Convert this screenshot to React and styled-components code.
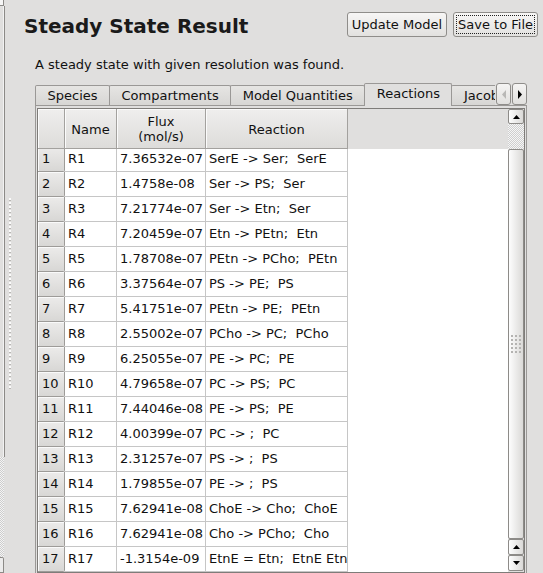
import React from "react";
import styled, { createGlobalStyle, css } from "styled-components";

const GlobalStyle = createGlobalStyle`
  html, body {
    margin: 0;
    padding: 0;
  }
  body {
    background: #e0dfde;
    font-family: "DejaVu Sans", "Liberation Sans", sans-serif;
    font-size: 13px;
    color: #000;
    overflow: hidden;
  }
  * {
    box-sizing: border-box;
  }
`;

const reactions = [
  ["R1", "7.36532e-07", "SerE -> Ser;  SerE"],
  ["R2", "1.4758e-08", "Ser -> PS;  Ser"],
  ["R3", "7.21774e-07", "Ser -> Etn;  Ser"],
  ["R4", "7.20459e-07", "Etn -> PEtn;  Etn"],
  ["R5", "1.78708e-07", "PEtn -> PCho;  PEtn"],
  ["R6", "3.37564e-07", "PS -> PE;  PS"],
  ["R7", "5.41751e-07", "PEtn -> PE;  PEtn"],
  ["R8", "2.55002e-07", "PCho -> PC;  PCho"],
  ["R9", "6.25055e-07", "PE -> PC;  PE"],
  ["R10", "4.79658e-07", "PC -> PS;  PC"],
  ["R11", "7.44046e-08", "PE -> PS;  PE"],
  ["R12", "4.00399e-07", "PC -> ;  PC"],
  ["R13", "2.31257e-07", "PS -> ;  PS"],
  ["R14", "1.79855e-07", "PE -> ;  PS"],
  ["R15", "7.62941e-08", "ChoE -> Cho;  ChoE"],
  ["R16", "7.62941e-08", "Cho -> PCho;  Cho"],
  ["R17", "-1.3154e-09", "EtnE = Etn;  EtnE Etn"],
];

const tabs = ["Species", "Compartments", "Model Quantities", "Reactions", "Jacobian"];

const Triangle = ({ dir = "up", color = "#000" }) => {
  const pts = {
    up: "0,4 3.5,0 7,4",
    down: "0,0 3.5,4 7,0",
    left: "4,0 0,4.5 4,9",
    right: "0,0 4,4.5 0,9",
  }[dir];
  const horizontal = dir === "left" || dir === "right";
  return (
    <svg width={horizontal ? 4 : 7} height={horizontal ? 9 : 4} viewBox={horizontal ? "0 0 4 9" : "0 0 7 4"}>
      <polygon points={pts} fill={color} />
    </svg>
  );
};

export default function App() {
  return (
    <>
      <GlobalStyle />
      <Window>
        <LeftPane>
          <LeftCap />
          <LeftBody />
          <LeftDither />
          <LeftFoot />
        </LeftPane>
        <Splitter>
          <SplitterGrip />
        </Splitter>

        <Main>
          <Header>
            <Title>Steady State Result</Title>
            <ButtonGroup>
              <Button>Update Model</Button>
              <Button $focused>Save to File</Button>
            </ButtonGroup>
          </Header>

          <Body>
            <Subtitle>A steady state with given resolution was found.</Subtitle>

            <TabBar>
              <TabList>
                {tabs.map((t) => (
                  <Tab key={t} $active={t === "Reactions"}>
                    {t}
                  </Tab>
                ))}
              </TabList>
              <TabArrows>
                <ArrowBtn>
                  <Triangle dir="left" color="#b9b8b6" />
                </ArrowBtn>
                <ArrowBtn>
                  <Triangle dir="right" />
                </ArrowBtn>
              </TabArrows>
            </TabBar>

            <Panel>
              <ScrollArea>
                <TableView>
                  <HeaderRow>
                    <HeadCell />
                    <HeadCell>Name</HeadCell>
                    <HeadCell>
                      Flux
                      <br />
                      (mol/s)
                    </HeadCell>
                    <HeadCell>Reaction</HeadCell>
                    <HeadFiller />
                  </HeaderRow>
                  <Viewport>
                    <Rows>
                      {reactions.map(([name, flux, eq], i) => (
                        <Row key={name}>
                          <RowHead>{i + 1}</RowHead>
                          <Cell>{name}</Cell>
                          <Cell>{flux}</Cell>
                          <Cell>{eq}</Cell>
                          <FillerCell />
                        </Row>
                      ))}
                    </Rows>
                  </Viewport>
                </TableView>

                <ScrollBar>
                  <ScrollBtn $h={15}>
                    <Triangle dir="up" />
                  </ScrollBtn>
                  <Trough />
                  <Thumb>
                    <svg width="11" height="19" viewBox="0 0 11 19">
                      {[0, 1, 2].map((c) =>
                        [0, 1, 2, 3, 4].map((r) => (
                          <rect key={`${c}-${r}`} x={c * 4} y={r * 4} width="2" height="2" fill="#b4b3b1" />
                        ))
                      )}
                    </svg>
                  </Thumb>
                  <ScrollBtn $h={16}>
                    <Triangle dir="up" />
                  </ScrollBtn>
                  <ScrollBtn $h={16}>
                    <Triangle dir="down" />
                  </ScrollBtn>
                </ScrollBar>
              </ScrollArea>
            </Panel>
          </Body>
        </Main>
      </Window>
    </>
  );
}

const Window = styled.div`
  display: flex;
  width: 543px;
  height: 573px;
  overflow: hidden;
  background: #e0dfde;
`;

const LeftPane = styled.div`
  width: 5px;
  flex-shrink: 0;
  display: flex;
  flex-direction: column;
`;

const LeftCap = styled.div`
  width: 4px;
  height: 6px;
  background: #f6f6f6;
  border-right: 1px solid #8c8a87;
  border-bottom: 1px solid #8c8a87;
`;

const LeftBody = styled.div`
  width: 5px;
  height: 451px;
  border-right: 1px solid #8c8a87;
  border-left: 3px solid #e0dfde;
  background: #f2f2f2;
  background-clip: content-box;
`;

const LeftDither = styled.div`
  flex: 1;
  width: 4px;
  background: repeating-conic-gradient(#cdcdcd 0 25%, #f4f4f4 0 50%) 0 0 / 2px 2px;
`;

const LeftFoot = styled.div`
  width: 4px;
  height: 16px;
  background: #ececec;
  border: 1px solid #8c8a87;
  border-left: none;
  border-radius: 0 2px 0 0;
`;

const Splitter = styled.div`
  width: 9px;
  flex-shrink: 0;
  display: flex;
  justify-content: center;
`;

const SplitterGrip = styled.div`
  width: 2px;
  height: 192px;
  margin-top: 198px;
  background: repeating-linear-gradient(
    to bottom,
    #fbfbfb 0 2px,
    #b9b7b4 2px 3px,
    transparent 3px 4px
  );
`;

const Main = styled.div`
  flex: 1;
  min-width: 0;
  display: flex;
  flex-direction: column;
`;

const Header = styled.div`
  display: flex;
  justify-content: space-between;
  align-items: flex-start;
  padding: 12px 5px 0 10px;
`;

const Title = styled.h1`
  margin: 2px 0 0;
  font-size: 20px;
  font-weight: bold;
  line-height: 24px;
  color: #1a1a1a;
`;

const ButtonGroup = styled.div`
  display: flex;
  gap: 6px;
`;

const Button = styled.button`
  position: relative;
  height: 25px;
  padding: 0 4px;
  font-family: inherit;
  font-size: 13px;
  color: #111;
  border: 1px solid #8f8d8a;
  border-radius: 3px;
  background: linear-gradient(#f7f6f5, #e2e1df);
  ${(p) =>
    p.$focused &&
    css`
      &::after {
        content: "";
        position: absolute;
        inset: 2px;
        border: 1px dotted #222;
      }
    `}
`;

const Body = styled.div`
  display: flex;
  flex-direction: column;
  padding: 0 16px 0 21px;
`;

const Subtitle = styled.p`
  margin: 19px 0 0;
  line-height: 16px;
  color: #111;
`;

const TabBar = styled.div`
  position: relative;
  z-index: 1;
  display: flex;
  align-items: flex-end;
  height: 23px;
  margin-top: 10px;
  margin-bottom: -1px;
`;

const TabList = styled.div`
  flex: 1;
  min-width: 0;
  height: 23px;
  display: flex;
  align-items: flex-end;
  overflow: hidden;
`;

const Tab = styled.div`
  flex-shrink: 0;
  height: 20px;
  margin-bottom: 1px;
  padding: 0 11.5px;
  line-height: 19px;
  color: #111;
  white-space: nowrap;
  border: 1px solid #9a9896;
  border-bottom: none;
  border-radius: 2px 2px 0 0;
  background: linear-gradient(#e6e5e3, #d7d6d4);
  & + & {
    margin-left: -1px;
  }
  ${(p) =>
    p.$active &&
    css`
      position: relative;
      height: 23px;
      margin-bottom: 0;
      line-height: 20px;
      background: #e0dfde;
    `}
`;

const TabArrows = styled.div`
  display: flex;
  gap: 1px;
  padding-left: 1px;
  margin-bottom: 1px;
`;

const ArrowBtn = styled.div`
  width: 15px;
  height: 22px;
  display: flex;
  align-items: center;
  justify-content: center;
  border: 1px solid #8f8d8a;
  border-radius: 3px;
  background: linear-gradient(#f5f4f3, #e1e0de);
`;

const Panel = styled.div`
  border: 1px solid #9a9896;
  padding: 2px 1px 0;
`;

const ScrollArea = styled.div`
  display: flex;
  border: 1px solid #7e7c79;
  background: #fff;
`;

const TableView = styled.div`
  flex: 1;
  min-width: 0;
`;

const columns = "27px 52px 89px 142px 1fr";

const HeaderRow = styled.div`
  display: grid;
  grid-template-columns: ${columns};
  height: 40px;
  background: #e0dfde;
`;

const HeadCell = styled.div`
  display: flex;
  align-items: center;
  justify-content: center;
  text-align: center;
  line-height: 15px;
  padding-top: 1px;
  color: #111;
  background: linear-gradient(#efeeed, #dddcda);
  border-right: 1px solid #a3a19e;
  border-bottom: 1px solid #a3a19e;
  box-shadow: inset 1px 1px 0 #fbfbfb;
`;

const HeadFiller = styled.div`
  background: #e0dfde;
`;

const Viewport = styled.div`
  height: 423px;
  overflow: hidden;
`;

const Rows = styled.div`
  margin-top: -2px;
`;

const Row = styled.div`
  display: grid;
  grid-template-columns: ${columns};
  height: 25px;
`;

const RowHead = styled.div`
  padding-left: 4px;
  line-height: 24px;
  color: #111;
  background: linear-gradient(#ecebea, #d8d7d5);
  border-right: 1px solid #9d9b98;
  border-bottom: 1px solid #9d9b98;
  box-shadow: inset 1px 1px 0 #fafafa;
  border-radius: 0 0 2px 0;
`;

const Cell = styled.div`
  padding-left: 3px;
  line-height: 24px;
  white-space: pre;
  overflow: hidden;
  color: #111;
  border-right: 1px solid #c6c6c6;
  border-bottom: 1px solid #c6c6c6;
`;

const FillerCell = styled.div`
  background: #fff;
`;

const ScrollBar = styled.div`
  width: 16px;
  flex-shrink: 0;
  display: flex;
  flex-direction: column;
  background: #e0dfde;
  padding-bottom: 1px;
`;

const scrollFace = css`
  border: 1px solid #8d8b88;
  border-radius: 2px;
  background: linear-gradient(to right, #fdfdfd, #dad9d7);
`;

const ScrollBtn = styled.div`
  ${scrollFace};
  height: ${(p) => p.$h}px;
  flex-shrink: 0;
  display: flex;
  align-items: center;
  justify-content: center;
`;

const Trough = styled.div`
  height: 25px;
  flex-shrink: 0;
  background: repeating-conic-gradient(#cfcfcf 0 25%, #f6f6f6 0 50%) 0 0 / 2px 2px;
`;

const Thumb = styled.div`
  ${scrollFace};
  flex: 1;
  display: flex;
  align-items: center;
  justify-content: center;
`;
